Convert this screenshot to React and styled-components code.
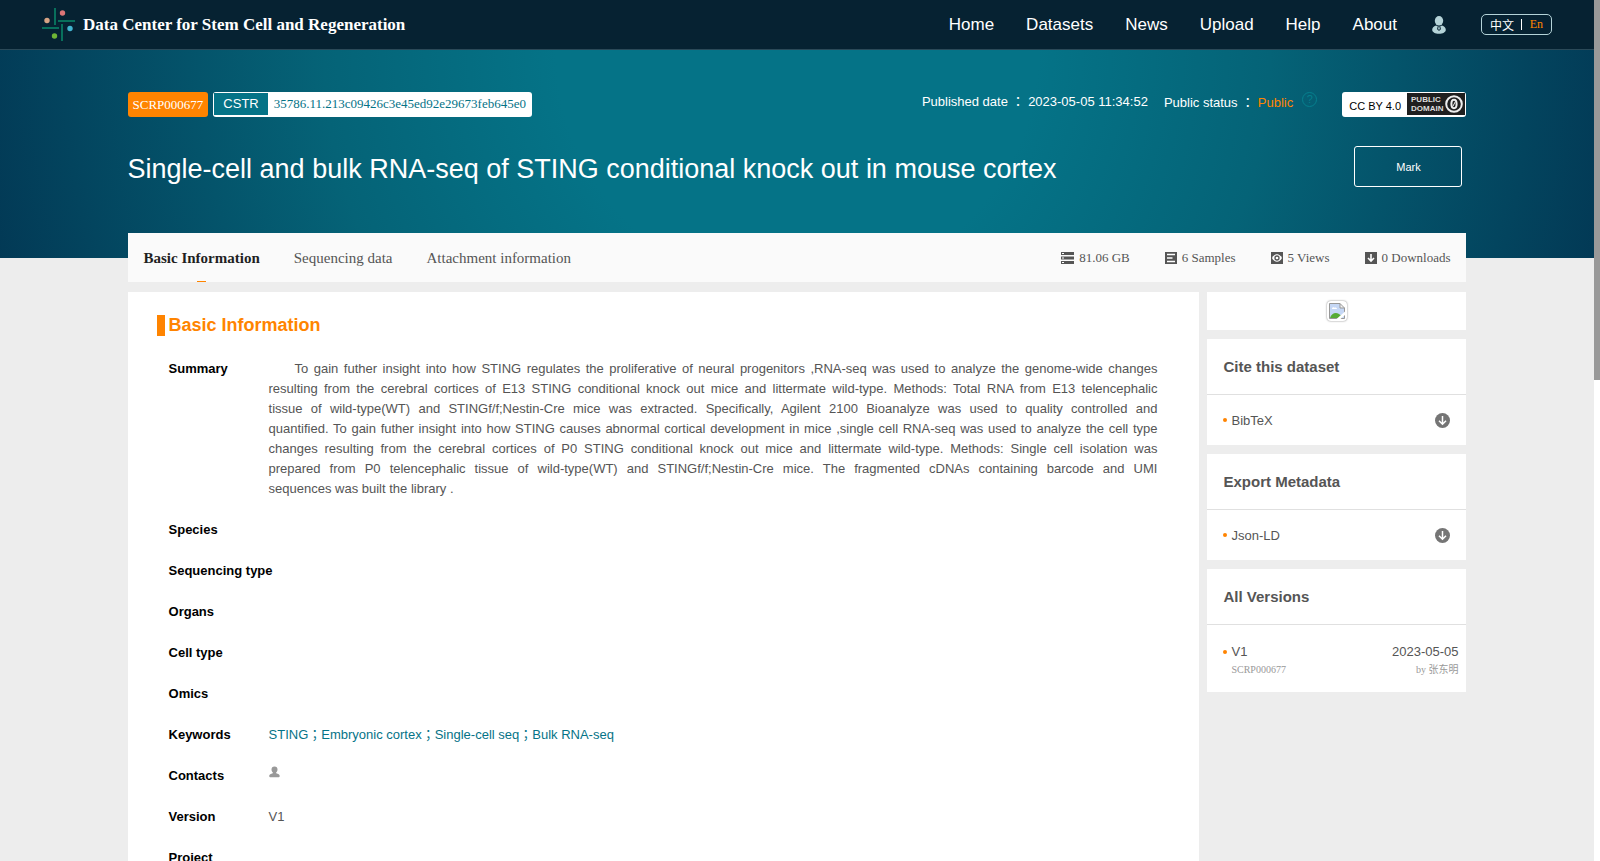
import React from "react";
import styled, { createGlobalStyle } from "styled-components";

const SANS = `"Liberation Sans", Arial, "Noto Sans CJK JP", sans-serif`;
const SERIF = `"Liberation Serif", "Times New Roman", "Noto Sans CJK SC", serif`;

const NAV = ["Home", "Datasets", "News", "Upload", "Help", "About"];
const TABS = ["Basic Information", "Sequencing data", "Attachment information"];
const KEYWORDS = [
  "STING",
  "Embryonic cortex",
  "Single-cell seq",
  "Bulk RNA-seq",
];
const SUMMARY = [
  "To gain futher insight into how STING regulates the proliferative of neural progenitors ,RNA-seq was used to analyze the genome-wide changes",
  "resulting from the cerebral cortices of E13 STING conditional knock out mice and littermate wild-type. Methods: Total RNA from E13 telencephalic",
  "tissue of wild-type(WT) and STINGf/f;Nestin-Cre mice was extracted. Specifically, Agilent 2100 Bioanalyze was used to quality controlled and",
  "quantified. To gain futher insight into how STING causes abnormal cortical development in mice ,single cell RNA-seq was used to analyze the cell type",
  "changes resulting from the cerebral cortices of P0 STING conditional knock out mice and littermate wild-type. Methods: Single cell isolation was",
  "prepared from P0 telencephalic tissue of wild-type(WT) and STINGf/f;Nestin-Cre mice. The fragmented cDNAs containing barcode and UMI",
  "sequences was built the library .",
];

const LogoMark = () => (
  <svg width="34" height="34" viewBox="0 0 34 34" fill="none">
    <g stroke="#08705c" strokeWidth="2">
      <path d="M13 0v17" />
      <path d="M16 13h17" />
      <path d="M0 20h17" />
      <path d="M20 16v17" />
    </g>
    <circle cx="20.500" cy="5" r="2.700" fill="#dd7577" />
    <circle cx="5" cy="12.500" r="2.700" fill="#d6a384" />
    <circle cx="28" cy="20.500" r="2.700" fill="#43b5d0" />
    <circle cx="12.500" cy="28" r="2.700" fill="#6fb536" />
  </svg>
);

const UserIcon = () => (
  <svg width="14" height="18" viewBox="0 0 14 18">
    <ellipse cx="7" cy="4.800" rx="4.200" ry="4.800" fill="#b4d3d8" />
    <path
      d="M4 9.400C1.500 10.200.2 11.900.2 13.800c0 2.500 3 4 6.800 4s6.800-1.500 6.800-4c0-1.900-1.300-3.600-3.800-4.400L8 10.400H6Z"
      fill="#b4d3d8"
    />
    <path
      d="M6.200 10.400 5.600 13c0 1.600 2.800 1.600 2.800 0l-.6-2.600"
      fill="none"
      stroke="#062232"
    />
  </svg>
);

const PublicDomainMark = () => (
  <svg width="22" height="22" viewBox="0 0 22 22" fill="none">
    <circle cx="11" cy="11" r="7.800" stroke="#eee" strokeWidth="2" />
    <ellipse cx="11" cy="11" rx="2.600" ry="4.200" stroke="#eee" strokeWidth="2" />
    <path d="m9.800 13.500 2.600-5" stroke="#eee" />
  </svg>
);

const StatIcon = ({ type }) => (
  <svg
    width={type === "size" ? 13 : 12}
    height="12"
    viewBox={type === "size" ? "0 0 13 12" : "0 0 12 12"}
  >
    {type === "size" && (
      <>
        <path d="M0 0h13v3H0zM0 4.500h13v3H0zM0 9h13v3H0z" fill="#555" />
        <path d="M1 1h2v1H1zM1 5.500h2v1H1zM1 10h2v1H1z" fill="#fff" />
      </>
    )}
    {type !== "size" && <path d="M0 0h12v12H0z" fill="#555" />}
    {type === "samples" && (
      <path
        d="M2 2.500h8M2 6h5.500M2 9.500h8"
        stroke="#fff"
        strokeWidth="1.400"
      />
    )}
    {type === "views" && (
      <>
        <path
          d="M1 6c2.500-5 7.500-5 10 0-2.500 5-7.500 5-10 0Z"
          fill="#fff"
        />
        <circle
          cx="6"
          cy="6"
          r="2"
          fill="none"
          stroke="#555"
          strokeWidth="1.300"
        />
      </>
    )}
    {type === "downloads" && (
      <path
        d="M6 2v7M3 6l3 3 3-3"
        fill="none"
        stroke="#fff"
        strokeWidth="1.600"
      />
    )}
  </svg>
);

const DownloadIcon = () => (
  <svg width="15" height="15" viewBox="0 0 15 15">
    <circle cx="7.500" cy="7.500" r="7.500" fill="#757575" />
    <path
      d="M7.500 3v8M4 7.800l3.500 3.400L11 7.800"
      fill="none"
      stroke="#fff"
      strokeWidth="1.500"
    />
  </svg>
);

const BrokenImage = () => (
  <svg width="16" height="16" viewBox="0 0 16 16">
    <path d="M.5.500H11L15.500 5v10.500H.5Z" fill="#c5d7f5" stroke="#979797" />
    <path d="M3 6c0-2 2-2 2.500-1.200C7 4 8 5 8 6Z" fill="#fff" />
    <path d="M1 15c2-6 8-7 12-1v1Z" fill="#57ab36" />
    <path d="M11 0v5h5V3.500L12.500 0Z" fill="#fff" />
    <path d="M11 .5V5h4.500Z" fill="#f4f4f4" stroke="#979797" />
    <path d="M7.500 16 16 8.500V12l-4.500 4Z" fill="#fff" />
  </svg>
);

const PersonIcon = () => (
  <svg width="11" height="12" viewBox="0 0 11 12" fill="#999">
    <path d="M5.500.500c2 0 3 1.300 3 2.900 0 1.400-.7 2.300-1.300 2.900v.9c2 .5 3.500 1.100 3.500 2.800 0 .9-.5 1.200-1.500 1.200H1.700C.7 11.200.2 10.900.2 10c0-1.700 1.600-2.300 3.600-2.800v-.9C3.200 5.700 2.500 4.800 2.500 3.400c0-1.600 1-2.900 3-2.900Z" />
  </svg>
);

const SideCard = ({ title, children }) => (
  <Card>
    <CardTitle>{title}</CardTitle>
    {children}
  </Card>
);

const App = () => {
  return (
    <>
      <GlobalStyle />
      <Page>
        <Header>
          <Brand href="#home">
            <LogoMark />
            Data Center for Stem Cell and Regeneration
          </Brand>
          <Nav>
            {NAV.map((item) => (
              <NavLink key={item} href={`#${item.toLowerCase()}`}>
                {item}
              </NavLink>
            ))}
            <UserLink href="#account" aria-label="Account">
              <UserIcon />
            </UserLink>
            <Language>
              <LanguageButton>中文</LanguageButton>
              <Divider />
              <LanguageButton $active>En</LanguageButton>
            </Language>
          </Nav>
        </Header>
        <Banner>
          <Container>
            <MetaRow>
              <Accession>SCRP000677</Accession>
              <Cstr href="#cstr">
                <CstrLabel>CSTR</CstrLabel>
                <CstrValue>35786.11.213c09426c3e45ed92e29673feb645e0</CstrValue>
              </Cstr>
              <Published>Published date ： 2023-05-05 11:34:52</Published>
              <Status>
                Public status ： <Orange>Public</Orange>
              </Status>
              <HelpButton aria-label="About public status">?</HelpButton>
              <License href="#license">
                <LicenseName>CC BY 4.0</LicenseName>
                <LicenseBadge>
                  <LicenseText>
                    <span>PUBLIC</span>
                    <span>DOMAIN</span>
                  </LicenseText>
                  <PublicDomainMark />
                </LicenseBadge>
              </License>
            </MetaRow>
            <TitleRow>
              <Title>
                Single-cell and bulk RNA-seq of STING conditional knock out in
                mouse cortex
              </Title>
              <MarkButton>Mark</MarkButton>
            </TitleRow>
          </Container>
        </Banner>
        <Body>
          <TabBar>
            <Tabs>
              {TABS.map((tab, i) => (
                <Tab key={tab} href={`#tab-${i}`} $active={i === 0}>
                  {tab}
                </Tab>
              ))}
            </Tabs>
            <Stats>
              <Stat>
                <StatIcon type="size" />
                81.06 GB
              </Stat>
              <Stat>
                <StatIcon type="samples" />6 Samples
              </Stat>
              <Stat>
                <StatIcon type="views" />5 Views
              </Stat>
              <Stat>
                <StatIcon type="downloads" />0 Downloads
              </Stat>
            </Stats>
          </TabBar>
          <Columns>
            <Main>
              <SectionTitle>Basic Information</SectionTitle>
              <Fields>
                <Field>
                  <dt>Summary</dt>
                  <Summary>
                    {SUMMARY.map((line) => (
                      <SummaryLine key={line}>{line} </SummaryLine>
                    ))}
                  </Summary>
                </Field>
                {["Species", "Sequencing type", "Organs", "Cell type", "Omics"].map(
                  (name) => (
                    <Field key={name}>
                      <dt>{name}</dt>
                      <dd />
                    </Field>
                  )
                )}
                <Field>
                  <dt>Keywords</dt>
                  <dd>
                    {KEYWORDS.map((keyword, i) => (
                      <Keyword key={keyword} href={`#keyword-${i}`}>
                        {i > 0 && "；"}
                        {keyword}
                      </Keyword>
                    ))}
                  </dd>
                </Field>
                <Field>
                  <dt>Contacts</dt>
                  <dd>
                    <PersonIcon />
                  </dd>
                </Field>
                <Field>
                  <dt>Version</dt>
                  <dd>V1</dd>
                </Field>
                <Field>
                  <dt>Project</dt>
                  <dd />
                </Field>
              </Fields>
            </Main>
            <Side>
              <Preview>
                <Thumb>
                  <BrokenImage />
                </Thumb>
              </Preview>
              <SideCard title="Cite this dataset">
                <CardRow>
                  <Bullet>BibTeX</Bullet>
                  <IconButton aria-label="Download BibTeX">
                    <DownloadIcon />
                  </IconButton>
                </CardRow>
              </SideCard>
              <SideCard title="Export Metadata">
                <CardRow>
                  <Bullet>Json-LD</Bullet>
                  <IconButton aria-label="Download Json-LD">
                    <DownloadIcon />
                  </IconButton>
                </CardRow>
              </SideCard>
              <SideCard title="All Versions">
                <VersionRow>
                  <div>
                    <Bullet>V1</Bullet>
                    <Note $indent>SCRP000677</Note>
                  </div>
                  <VersionDate>
                    2023-05-05
                    <Note>by 张东明</Note>
                  </VersionDate>
                </VersionRow>
              </SideCard>
            </Side>
          </Columns>
        </Body>
      </Page>
      <ScrollRail>
        <ScrollThumb />
      </ScrollRail>
    </>
  );
};

export default App;

const GlobalStyle = createGlobalStyle`
  * {
    box-sizing: border-box;
  }
  body {
    margin: 0;
    background: #ededed;
    font-family: ${SANS};
    font-size: 13px;
    color: #555;
  }
  a {
    color: inherit;
    text-decoration: none;
  }
  button {
    padding: 0;
    border: 0;
    background: none;
    color: inherit;
    font: inherit;
    cursor: pointer;
  }
  svg {
    display: block;
    flex: none;
  }
`;

const Page = styled.div`
  padding-right: 6px;
`;

const ScrollRail = styled.div`
  position: fixed;
  top: 0;
  right: 0;
  bottom: 0;
  width: 6px;
  background: #fff;
`;

const ScrollThumb = styled.div`
  height: 380px;
  background: #999;
`;

const Header = styled.header`
  display: flex;
  align-items: center;
  justify-content: space-between;
  height: 50px;
  padding: 0 42px;
  background: #062232;
  border-bottom: 1px solid #2b4958;
  color: #fff;
`;

const Brand = styled.a`
  display: flex;
  align-items: center;
  gap: 7px;
  font: bold 17px ${SERIF};
`;

const Nav = styled.nav`
  display: flex;
  align-items: center;
  gap: 32px;
`;

const NavLink = styled.a`
  font-size: 17px;
`;

const UserLink = styled.a`
  padding: 0 3px;
`;

const Language = styled.div`
  display: flex;
  align-items: center;
  justify-content: space-between;
  width: 71px;
  height: 21px;
  padding: 0 8px;
  border: 1px solid #b4d3d8;
  border-radius: 5px;
  font: 12px ${SERIF};
`;

const LanguageButton = styled.button`
  color: ${({ $active }) => ($active ? "#ff8400" : "#fff")};
`;

const Divider = styled.span`
  width: 1px;
  height: 11px;
  background: #fff;
`;

const Banner = styled.section`
  height: 208px;
  background: radial-gradient(
    circle 860px at 50% 0,
    #057387 0%,
    #057387 28%,
    #056377 55%,
    #023552 100%
  );
  color: #fff;
`;

const Container = styled.div`
  width: 84%;
  margin: 0 auto;
`;

const MetaRow = styled.div`
  display: flex;
  align-items: flex-start;
  padding-top: 42px;
`;

const Accession = styled.span`
  height: 25px;
  margin-right: 5px;
  padding: 0 5px;
  border-radius: 3px;
  background: #ff8400;
  font: 13px/25px ${SERIF};
`;

const Cstr = styled.a`
  display: flex;
  height: 25px;
  padding: 1px 0 2px 1px;
  border-radius: 3px;
  background: #fff;
`;

const CstrLabel = styled.span`
  padding: 0 9px;
  background: #057387;
  font-size: 13px;
  line-height: 22px;
`;

const CstrValue = styled.span`
  padding: 0 6px;
  color: #057387;
  font: 13px/22px ${SERIF};
`;

const Published = styled.span`
  margin-left: auto;
  line-height: 20px;
`;

const Status = styled.span`
  margin-left: 16px;
  line-height: 22px;
`;

const Orange = styled.span`
  color: #ff8400;
`;

const HelpButton = styled.button`
  width: 15px;
  height: 15px;
  margin: 0 25px 0 9px;
  border: 1px solid #05808e;
  border-radius: 50%;
  color: #05808e;
  font-size: 11px;
  line-height: 13px;
`;

const License = styled.a`
  display: flex;
  height: 25px;
  padding: 1px 1px 2px 7px;
  border-radius: 3px;
  background: #fff;
`;

const LicenseName = styled.span`
  padding-right: 6px;
  color: #000;
  font-size: 11px;
  line-height: 26px;
`;

const LicenseBadge = styled.span`
  display: flex;
  align-items: center;
  padding-left: 4px;
  background: #1f1f1f;
`;

const LicenseText = styled.span`
  display: flex;
  flex-direction: column;
  color: #ddd;
  font-size: 8px;
  font-weight: bold;
  line-height: 9px;
`;

const TitleRow = styled.div`
  display: flex;
  align-items: center;
  justify-content: space-between;
  margin-top: 29px;
  padding-right: 4px;
`;

const Title = styled.h1`
  margin: 0;
  padding-top: 6px;
  font-size: 27px;
  font-weight: normal;
`;

const MarkButton = styled.button`
  width: 108px;
  height: 41px;
  border: 1px solid #fff;
  border-radius: 3px;
  font-size: 11px;
`;

const Body = styled(Container)`
  margin-top: -25px;
  padding-bottom: 50px;
`;

const TabBar = styled.div`
  display: flex;
  justify-content: space-between;
  height: 49px;
  padding: 0 16px;
  background: #fafafa;
  font-family: ${SERIF};
`;

const Tabs = styled.nav`
  display: flex;
  gap: 34px;
`;

const Tab = styled.a`
  display: flex;
  flex-direction: column;
  align-items: center;
  color: ${({ $active }) => ($active ? "#1f1f1f" : "#555")};
  font-size: 15px;
  font-weight: ${({ $active }) => ($active ? "bold" : "normal")};
  line-height: 50px;
  &::after {
    content: "";
    width: 9px;
    height: 1px;
    margin-top: -2px;
    background: ${({ $active }) => ($active ? "#ff8400" : "transparent")};
  }
`;

const Stats = styled.div`
  display: flex;
  align-items: center;
  gap: 35px;
`;

const Stat = styled.span`
  display: flex;
  align-items: center;
  gap: 5px;
`;

const Columns = styled.div`
  display: flex;
  align-items: stretch;
  gap: 8px;
  margin-top: 10px;
`;

const Main = styled.main`
  flex: 1;
  padding: 23px 42px 42px 29px;
  background: #fff;
`;

const SectionTitle = styled.h2`
  margin: 0;
  padding-left: 4px;
  border-left: 8px solid #ff8400;
  color: #ff8400;
  font-size: 18px;
  line-height: 21px;
`;

const Fields = styled.dl`
  display: flex;
  flex-direction: column;
  gap: 21px;
  margin: 23px 0 0 12px;
`;

const Field = styled.div`
  display: flex;
  line-height: 20px;
  dt {
    flex: none;
    width: 100px;
    color: #000;
    font-weight: bold;
    white-space: nowrap;
  }
  dd {
    flex: 1;
    margin: 0;
  }
`;

const Summary = styled.dd`
  text-align: justify;
`;

const SummaryLine = styled.span`
  display: block;
  text-align-last: justify;
  &:first-child {
    text-indent: 2em;
  }
  &:last-child {
    text-align-last: left;
  }
`;

const Keyword = styled.a`
  color: #057387;
`;

const Side = styled.aside`
  display: flex;
  flex-direction: column;
  gap: 9px;
  width: 259px;
`;

const Preview = styled.div`
  display: flex;
  align-items: center;
  justify-content: center;
  height: 38px;
  background: #fff;
`;

const Thumb = styled.div`
  padding: 2px;
  border-radius: 4px;
  box-shadow: 0 0 2px #777;
`;

const Card = styled.section`
  background: #fff;
`;

const CardTitle = styled.h3`
  margin: 0;
  padding: 0 16px;
  border-bottom: 1px solid #e0e0e0;
  font-size: 15px;
  line-height: 55px;
`;

const CardRow = styled.div`
  display: flex;
  align-items: center;
  justify-content: space-between;
  height: 50px;
  padding: 0 16px;
`;

const Bullet = styled.div`
  display: flex;
  align-items: center;
  gap: 4px;
  &::before {
    content: "";
    width: 4px;
    height: 4px;
    border-radius: 50%;
    background: #ff8400;
  }
`;

const IconButton = styled.button`
  display: flex;
`;

const VersionRow = styled.div`
  display: flex;
  justify-content: space-between;
  padding: 17px 8px 14px 16px;
  line-height: 20px;
`;

const VersionDate = styled.div`
  text-align: right;
`;

const Note = styled.div`
  padding-left: ${({ $indent }) => ($indent ? "8px" : "0")};
  color: #999;
  font: 10px/16px ${SERIF};
`;
